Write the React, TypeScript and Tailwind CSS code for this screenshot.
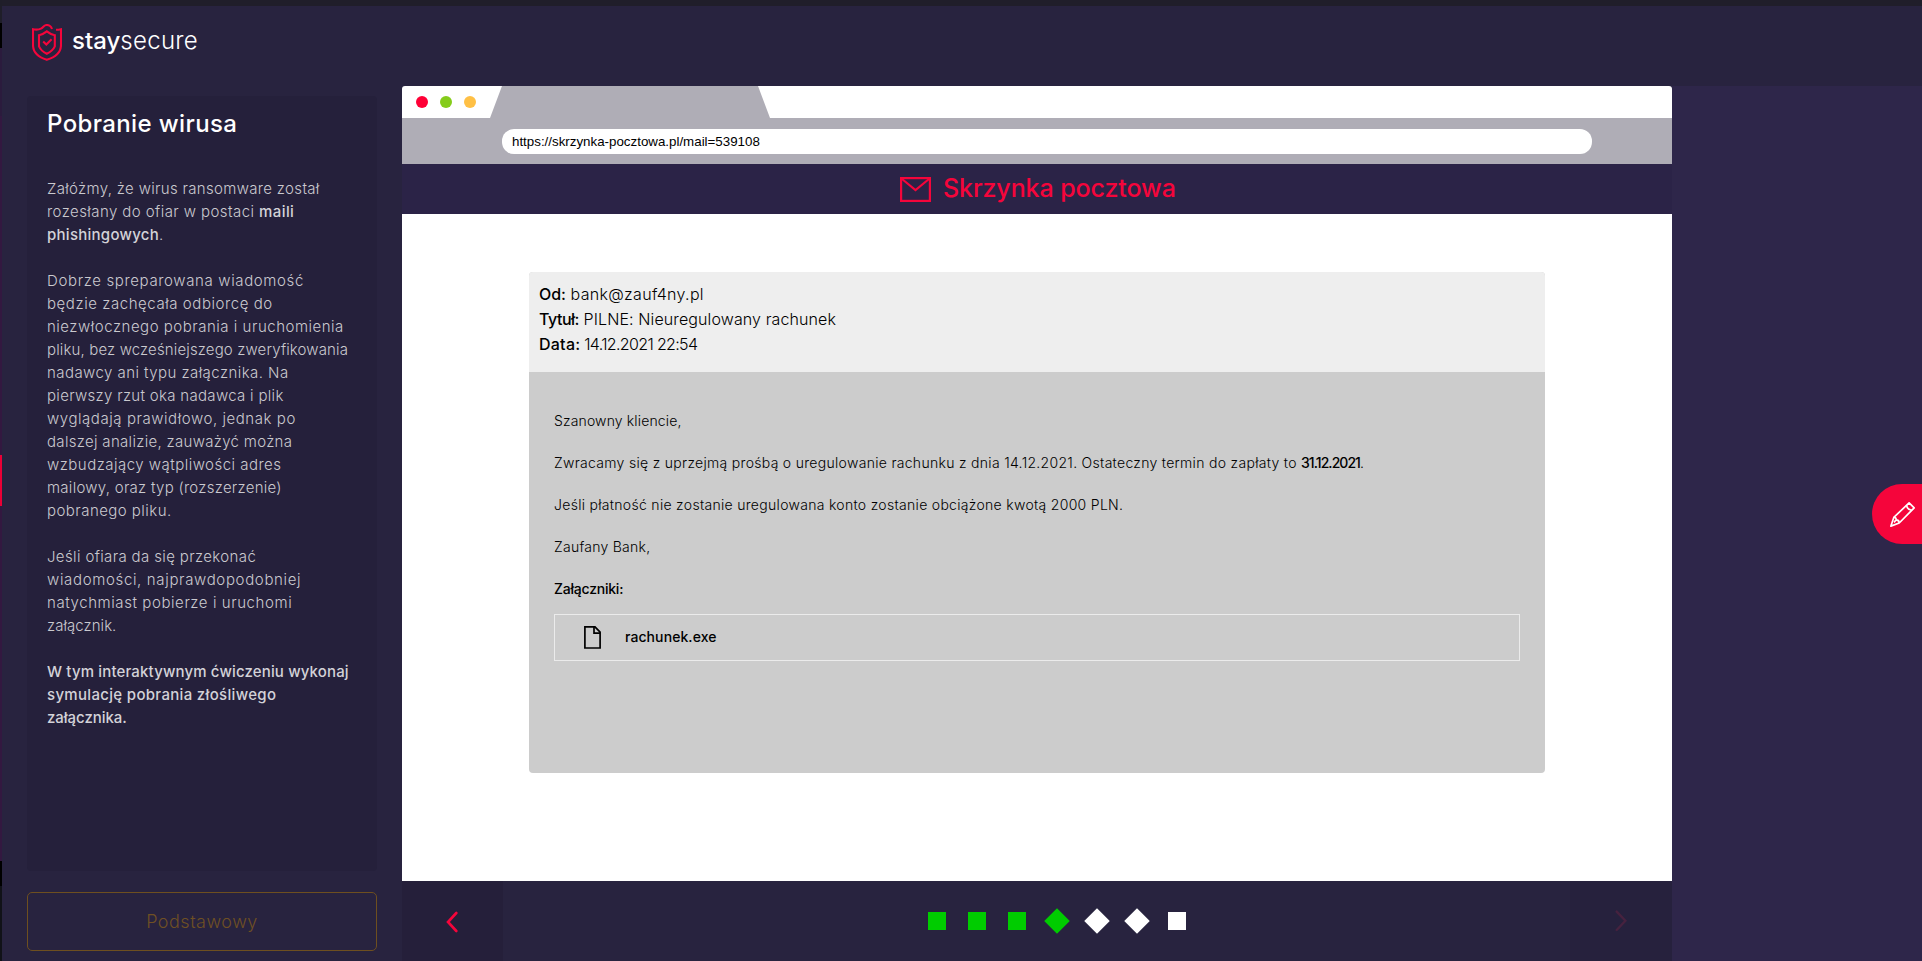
import React from "react";

type Span = { text: string; cls: string; bold?: boolean };

const paragraphs: Span[][][] = [
  [
    [{ text: "Załóżmy, że wirus ransomware został", cls: "tracking-[0.33px]" }],
    [
      { text: "rozesłany do ofiar w postaci ", cls: "tracking-[0.43px]" },
      { text: "maili", cls: "tracking-[0.4px]", bold: true },
    ],
    [
      { text: "phishingowych", cls: "tracking-[0.27px]", bold: true },
      { text: ".", cls: "tracking-normal" },
    ],
  ],
  [
    [{ text: "Dobrze spreparowana wiadomość", cls: "tracking-[0.64px]" }],
    [{ text: "będzie zachęcała odbiorcę do", cls: "tracking-[0.56px]" }],
    [{ text: "niezwłocznego pobrania i uruchomienia", cls: "tracking-[0.52px]" }],
    [{ text: "pliku, bez wcześniejszego zweryfikowania", cls: "tracking-[0.14px]" }],
    [{ text: "nadawcy ani typu załącznika. Na", cls: "tracking-[0.44px]" }],
    [{ text: "pierwszy rzut oka nadawca i plik", cls: "tracking-[0.31px]" }],
    [{ text: "wyglądają prawidłowo, jednak po", cls: "tracking-[0.56px]" }],
    [{ text: "dalszej analizie, zauważyć można", cls: "tracking-[0.31px]" }],
    [{ text: "wzbudzający wątpliwości adres", cls: "tracking-[0.48px]" }],
    [{ text: "mailowy, oraz typ (rozszerzenie)", cls: "tracking-[0.27px]" }],
    [{ text: "pobranego pliku.", cls: "tracking-[0.46px]" }],
  ],
  [
    [{ text: "Jeśli ofiara da się przekonać", cls: "tracking-[0.37px]" }],
    [{ text: "wiadomości, najprawdopodobniej", cls: "tracking-[0.66px]" }],
    [{ text: "natychmiast pobierze i uruchomi", cls: "tracking-[0.58px]" }],
    [{ text: "załącznik.", cls: "tracking-[0.05px]" }],
  ],
  [
    [{ text: "W tym interaktywnym ćwiczeniu wykonaj", cls: "tracking-[0.15px]", bold: true }],
    [{ text: "symulację pobrania złośliwego", cls: "tracking-[0.32px]", bold: true }],
    [{ text: "załącznika.", cls: "tracking-[-0.04px]", bold: true }],
  ],
];

const steps = [
  { done: true, diamond: false },
  { done: true, diamond: false },
  { done: true, diamond: false },
  { done: true, diamond: true },
  { done: false, diamond: true },
  { done: false, diamond: true },
  { done: false, diamond: false },
];

function Logo() {
  return (
    <div className="flex h-[37px] items-start">
      <svg width="30" height="37" viewBox="0 0 30 37" fill="none" stroke="#f5053b" strokeWidth="2.1">
        <path d="M20 5C19 2.2 17.4 1 14.8 1C11.6 1 11.8 3.2 9 4.6C6.6 5.8 3.6 5.8 1 5.2V21C1 28.4 6.4 33.2 14.8 35.8C23.4 33.2 29 28.4 29 21V5.2C27.2 5.6 25.6 5.9 24 5.8" />
        <path d="M14.8 7.4C12.6 9.2 9.8 10.6 7 11.2V22.4C8.4 25.6 11 28 14.8 29.8C18.6 28 21.4 25.6 22.8 22.4V11.2C19.8 10.6 17 9.2 14.8 7.4Z" />
        <path d="M11.2 17.6L14.3 20.6L19.6 15.2" />
      </svg>
      <div className="mt-[1.5px] ml-[10px] flex text-2xl leading-[30px] text-white">
        <span className="font-medium">stay</span>
        <span className="font-light tracking-[0.3px]">secure</span>
      </div>
    </div>
  );
}

function Sidebar() {
  return (
    <aside className="flex w-[400px] flex-col bg-[#28233f] pr-[25px] pl-[25px]">
      <section className="mt-[10px] h-[775px] rounded-sm bg-[#25203b] pl-5 text-[#cac9cf]">
        <h1 className="pt-[10px] text-2xl leading-9 font-medium tracking-[0.38px] text-white">
          Pobranie wirusa
        </h1>
        <div className="mt-[35px] flex flex-col gap-[23px] text-[15px] leading-[23px] font-light whitespace-pre">
          {paragraphs.map((lines, i) => (
            <p key={i}>
              {lines.map((spans, j) => (
                <span key={j} className="block">
                  {spans.map((s, k) => (
                    <span key={k} className={s.bold ? `${s.cls} font-medium text-[#d3d2d8]` : s.cls}>
                      {s.text}
                    </span>
                  ))}
                </span>
              ))}
            </p>
          ))}
        </div>
      </section>
      <button className="mt-[21px] h-[59px] w-[350px] rounded-[5px] border border-[#6e4f1f] text-lg leading-7 font-light tracking-[0.5px] text-[#6f5024]">
        Podstawowy
      </button>
    </aside>
  );
}

function BrowserBar() {
  return (
    <>
      <div className="flex h-8 rounded-t-[3px] bg-white pl-[14px]">
        <div className="flex w-[74px] items-center gap-3">
          <i className="size-3 rounded-full bg-[#ff0036]" />
          <i className="size-3 rounded-full bg-[#85cc1b]" />
          <i className="size-3 rounded-full bg-[#ffc045]" />
        </div>
        <div className="h-8 w-[280px] bg-[#afadb6] [clip-path:polygon(12px_0,268px_0,100%_100%,0_100%)]" />
      </div>
      <div className="h-[46px] bg-[#afadb6] pt-[11px] pl-[100px]">
        <div className="h-[25px] w-[1090px] rounded-[12px] bg-white pl-[10px] font-['Liberation_Sans',sans-serif] text-[13.33px] leading-[25px] text-black">
          https://skrzynka-pocztowa.pl/mail=539108
        </div>
      </div>
    </>
  );
}

function Mail() {
  return (
    <div className="flex-1 bg-white pt-[58px] pl-[127px] text-black">
      <article className="h-[501px] w-[1016px] overflow-hidden rounded-[4px] bg-[#cccccc]">
        <header className="h-[100px] bg-[#eeeeee] pt-[10px] pl-[10px] text-base leading-[25px] font-light whitespace-pre">
          <p>
            <span className="font-medium tracking-[-0.1px]">Od:</span>
            <span className="tracking-[0.31px]"> bank@zauf4ny.pl</span>
          </p>
          <p>
            <span className="font-medium tracking-[-0.48px]">Tytuł:</span>
            <span className="tracking-[0.11px]"> PILNE: Nieuregulowany rachunek</span>
          </p>
          <p>
            <span className="font-medium tracking-[0.24px]">Data:</span>
            <span className="tracking-[-0.65px]"> 14.12.2021 22:54</span>
          </p>
        </header>
        <div className="flex flex-col gap-[21px] px-[25px] pt-[38px] text-sm leading-[21px] font-light whitespace-pre">
          <p className="tracking-[0.14px]">Szanowny kliencie,</p>
          <p>
            <span className="tracking-[0.3px]">
              Zwracamy się z uprzejmą prośbą o uregulowanie rachunku z dnia 14.12.2021. Ostateczny termin do zapłaty to{" "}
            </span>
            <span className="font-medium tracking-[-0.94px]">31.12.2021</span>.
          </p>
          <p className="tracking-[0.3px]">
            Jeśli płatność nie zostanie uregulowana konto zostanie obciążone kwotą 2000 PLN.
          </p>
          <p className="tracking-[0.26px]">Zaufany Bank,</p>
          <p className="font-medium tracking-[-0.22px]">Załączniki:</p>
        </div>
        <div className="mx-[25px] mt-[15px] flex h-[47px] items-center border border-[#ebebeb] pl-[29px]">
          <svg width="17" height="23" viewBox="0 0 17 23" fill="none" stroke="#000" strokeWidth="1.7">
            <path d="M0.9 0.9H11L16.1 6.2V22H0.9Z" />
            <path d="M10 0.9V7.2H16.1" />
          </svg>
          <span className="ml-6 pb-[2px] text-sm leading-[21px] font-medium tracking-[0.08px]">rachunek.exe</span>
        </div>
      </article>
    </div>
  );
}

function Footer() {
  return (
    <footer className="flex h-20 bg-[#28233f]">
      <button className="flex w-[101px] items-center justify-center bg-[#251f3a] pt-px pr-px">
        <svg width="12" height="22" viewBox="0 0 12 22" fill="none" stroke="#f5053b" strokeWidth="2.6" strokeLinecap="round">
          <path d="M10.3 2L2 11L10.3 20" />
        </svg>
      </button>
      <div className="flex flex-1 items-center gap-[22px] pl-[425px]">
        {steps.map((s, i) => (
          <i
            key={i}
            className={`size-[18px] ${s.done ? "bg-[#00cc00]" : "bg-white"} ${s.diamond ? "rotate-45" : ""}`}
          />
        ))}
      </div>
      <button className="flex w-[102px] items-center justify-center bg-[#26213d] pr-px">
        <svg width="12" height="22" viewBox="0 0 12 22" fill="none" stroke="#46223f" strokeWidth="2.4" strokeLinecap="round">
          <path d="M1.7 1.6L10.4 10.8L1.7 20" />
        </svg>
      </button>
    </footer>
  );
}

export default function App() {
  return (
    <div className="relative flex h-[961px] w-[1922px] overflow-hidden bg-[#2e264a] font-['Inter',sans-serif]">
      <div className="flex w-[2px] flex-col bg-[#331840]">
        <i className="h-[23px] bg-[#1f1e29]" />
        <i className="h-[25px] bg-black" />
        <i className="h-[68px] bg-[#2b1b3d]" />
        <i className="mt-[339px] h-[51px] bg-[#eb0036]" />
        <i className="mt-[355px] h-[25px] bg-black" />
        <i className="h-[75px] bg-[#111218]" />
      </div>
      <div className="flex flex-1 flex-col">
        <div className="h-[6px] bg-[#201e2a]" />
        <header className="h-20 bg-[#28233f] pt-[18px] pl-[30px]">
          <Logo />
        </header>
        <div className="flex flex-1">
          <Sidebar />
          <main className="flex w-[1270px] flex-col bg-[#28233f]">
            <BrowserBar />
            <div className="flex h-[50px] items-center bg-[#2b2347] pl-[498px] text-[#f5053b]">
              <svg width="31" height="25" viewBox="0 0 31 25" fill="none" stroke="currentColor" strokeWidth="2.2">
                <rect x="1.1" y="1.1" width="28.8" height="22.8" />
                <path d="M2 2L15.5 13L29 2" />
              </svg>
              <h2 className="ml-[12px] pb-[2px] text-[25px] leading-[38px] font-medium tracking-[-0.1px]">
                Skrzynka pocztowa
              </h2>
            </div>
            <Mail />
            <Footer />
          </main>
        </div>
      </div>
      <button className="absolute top-[484px] right-0 flex h-[60px] w-[50px] items-center rounded-l-[30px] bg-[#f5053b] pl-[18px]">
        <svg width="25" height="25" viewBox="0 0 25 25" fill="none" stroke="#fff" strokeWidth="1.7" strokeLinejoin="round">
          <path d="M0.9 24.1L3.8 15.4L19.1 0.9L24.2 5.8L9.2 21Z" />
          <path d="M3.8 15.4C5.4 15.2 6.2 16 6.2 17.8C8.2 17.9 9.2 19 9.2 21M16.6 3.4C16.8 5.4 18.6 7.8 21.6 8.2M6.2 17.8L4 20.4" />
        </svg>
      </button>
    </div>
  );
}
